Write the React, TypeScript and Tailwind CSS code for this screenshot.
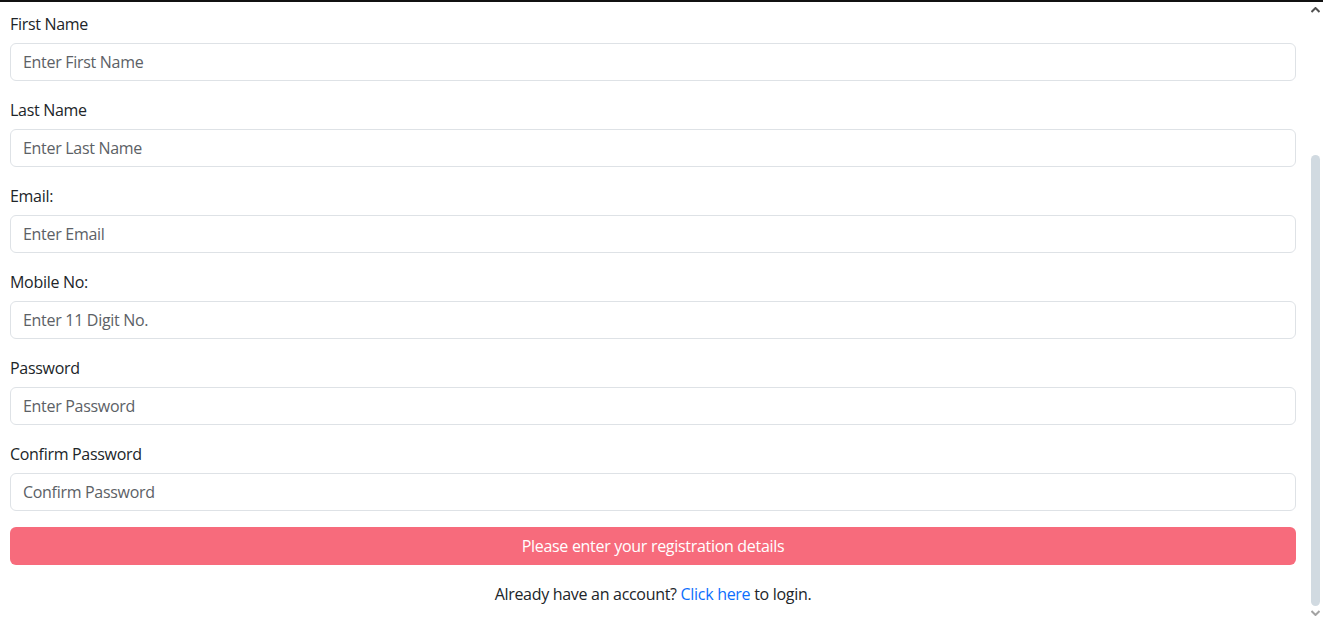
const fields = [
  { label: "First Name", placeholder: "Enter First Name", type: "text" },
  { label: "Last Name", placeholder: "Enter Last Name", type: "text" },
  { label: "Email:", placeholder: "Enter Email", type: "email" },
  { label: "Mobile No:", placeholder: "Enter 11 Digit No.", type: "text" },
  { label: "Password", placeholder: "Enter Password", type: "password" },
  { label: "Confirm Password", placeholder: "Confirm Password", type: "password" },
];

const Field = ({ label, placeholder, type }: { label: string; placeholder: string; type: string }) => (
  <div className="mb-4">
    <label className="block mb-2 leading-6 pt-px h-6 text-[#212529]">{label}</label>
    <input
      type={type}
      placeholder={placeholder}
      className="block w-full h-[38px] px-3 border border-[#dee2e6] rounded-md bg-white text-[#212529] tracking-[-0.3px] placeholder:text-[#5c6166] outline-none"
    />
  </div>
);

const App = () => (
  <div className="h-[621px] w-[1323px] flex flex-col bg-white overflow-hidden font-['Open_Sans',sans-serif] text-base tracking-[-0.3px]">
    <div className="h-[2px] bg-[#111111]"></div>
    <div className="flex flex-1 min-h-0">
      <div className="flex-1 pt-[9px] pl-[10px] pr-[12px]">
        <form>
          {fields.map((f) => (
            <Field key={f.label} {...f} />
          ))}
          <button
            type="button"
            disabled
            className="w-full h-[38px] rounded-md bg-[#f76b7c] text-white"
          >
            Please enter your registration details
          </button>
          <p className="text-center mt-[16px] leading-6 pt-px text-[#212529]">
            Already have an account? <a className="text-[#0d6efd]">Click here</a> to login.
          </p>
        </form>
      </div>
      {/* page scrollbar */}
      <div className="w-[15px] flex flex-col items-center">
        <svg width="9" height="6" viewBox="0 0 9 6" className="mt-[5px]">
          <path d="M0.5 5 L4.5 1 L8.5 5" fill="none" stroke="#505050" strokeWidth="2" />
        </svg>
        <div className="flex-1 w-full flex flex-col px-[3px] pb-[4px]">
          <div className="h-[142px]"></div>
          <div className="flex-1 rounded-full bg-[#d1dae1]"></div>
        </div>
        <svg width="9" height="6" viewBox="0 0 9 6" className="mb-[5px]">
          <path d="M0.5 1 L4.5 5 L8.5 1" fill="none" stroke="#a3a3a3" strokeWidth="2" />
        </svg>
      </div>
    </div>
  </div>
);

export default App;
